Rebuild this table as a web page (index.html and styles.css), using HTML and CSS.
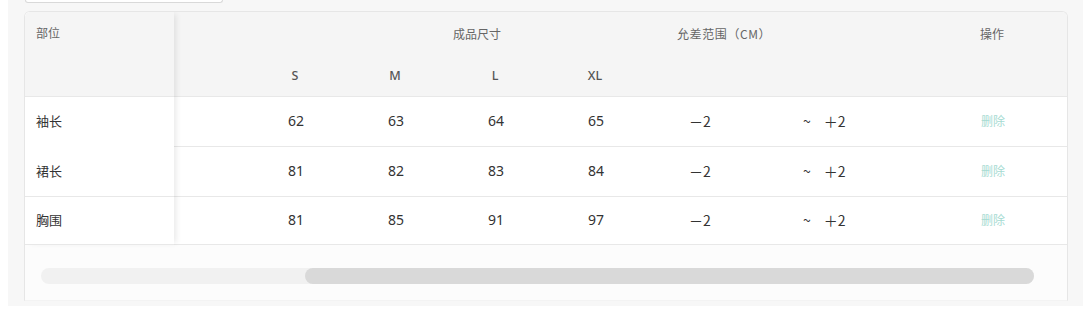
FILE: index.html
```html
<!DOCTYPE html>
<html lang="zh">
<head>
<meta charset="utf-8">
<link rel="stylesheet" href="styles.css">
</head>
<body>
<div class="wrap">
  <div class="input-stub"></div>
  <div class="card">
    <div class="table">
      <div class="fixed">
        <div class="fcell fhead">部位</div>
        <div class="fcell frow noline">袖长</div>
        <div class="fcell frow">裙长</div>
        <div class="fcell frow last">胸围</div>
      </div>
      <div class="scroll">
        <div class="h1 span-size">成品尺寸</div>
        <div class="h1 span-tol">允差范围（CM）</div>
        <div class="h1 center">操作</div>
        <div class="h1"></div>

        <div class="h2"></div>
        <div class="h2 center size">S</div>
        <div class="h2 center size">M</div>
        <div class="h2 center size">L</div>
        <div class="h2 center size">XL</div>
        <div class="h2"></div>
        <div class="h2"></div>
        <div class="h2"></div>
        <div class="h2"></div>

        <div class="td"></div>
        <div class="td center">62</div>
        <div class="td center">63</div>
        <div class="td center">64</div>
        <div class="td center">65</div>
        <div class="td tmin">－2</div>
        <div class="td tmax">~<span class="plus">＋2</span></div>
        <div class="td center del">删除</div>
        <div class="td"></div>

        <div class="td"></div>
        <div class="td center">81</div>
        <div class="td center">82</div>
        <div class="td center">83</div>
        <div class="td center">84</div>
        <div class="td tmin">－2</div>
        <div class="td tmax">~<span class="plus">＋2</span></div>
        <div class="td center del">删除</div>
        <div class="td"></div>

        <div class="td short"></div>
        <div class="td short center">81</div>
        <div class="td short center">85</div>
        <div class="td short center">91</div>
        <div class="td short center">97</div>
        <div class="td short tmin">－2</div>
        <div class="td short tmax">~<span class="plus">＋2</span></div>
        <div class="td short center del">删除</div>
        <div class="td short"></div>
      </div>
    </div>
    <div class="scrollbar-area">
      <div class="track">
        <div class="track-gap"></div>
        <div class="thumb"></div>
      </div>
    </div>
  </div>
</div>
</body>
</html>
```

FILE: styles.css
```css
html, body {
  margin: 0;
  padding: 0;
  background: #ffffff;
}
body {
  padding-left: 8px;
  font-family: "Noto Sans", "Noto Sans CJK SC", sans-serif;
  color: #333;
}
.wrap {
  background: #f7f7f7;
  padding: 0 15px 5px 16px;
}
.input-stub {
  width: 196px;
  height: 2px;
  margin-left: 1px;
  margin-bottom: 8px;
  background: #fff;
  border: 1px solid #d9d9d9;
  border-top: none;
  border-radius: 0 0 4px 4px;
}
.card {
  border: 1px solid #e6e6e6;
  border-bottom-color: #f3f3f3;
  border-radius: 6px 6px 0 0;
  background: #fff;
  overflow: hidden;
}
.table {
  display: flex;
}
.fixed {
  width: 149px;
  flex: none;
  display: flex;
  flex-direction: column;
  position: relative;
  z-index: 1;
  background: #fff;
  box-shadow: 4px 0 6px -2px rgba(0, 0, 0, 0.09);
}
.fcell {
  box-sizing: border-box;
  padding-left: 11px;
  font-family: "Noto Sans CJK SC", sans-serif;
  border-bottom: 1px solid #e8e8e8;
}
.fhead {
  height: 85px;
  background: #f5f5f5;
  font-size: 12px;
  color: #666;
  padding-top: 12px;
}
.frow {
  height: 50px;
  font-size: 13px;
  color: #333;
  display: flex;
  align-items: center;
  padding-bottom: 2px;
}
.frow.noline {
  border-bottom-color: #fff;
}
.frow.last {
  height: 48px;
}
.scroll {
  flex: 1;
  display: grid;
  grid-template-columns: 71px 100px 100px 100px 100px 110px 180px 114px 1fr;
}
.h1 {
  height: 42px;
  background: #f5f5f5;
  font-family: "Noto Sans CJK SC", sans-serif;
  font-size: 12px;
  color: #666;
  display: flex;
  align-items: center;
}
.span-size {
  grid-column: 1 / 6;
  padding-left: 279px;
}
.span-tol {
  grid-column: 6 / 8;
  padding-left: 32px;
  letter-spacing: 0.6px;
}
.h2 {
  box-sizing: border-box;
  height: 43px;
  background: #f5f5f5;
  border-bottom: 1px solid #e8e8e8;
  display: flex;
  align-items: center;
}
.size {
  font-size: 12.5px;
  font-weight: 500;
  color: #555;
}
.center {
  justify-content: center;
}
.td {
  box-sizing: border-box;
  height: 50px;
  border-bottom: 1px solid #e8e8e8;
  display: flex;
  align-items: center;
  font-size: 14px;
  color: #333;
  padding-bottom: 2px;
}
.td.center {
  padding-left: 2px;
}
.td.short {
  height: 48px;
}
.tmin {
  padding-left: 44px;
  font-family: "Noto Sans CJK SC", sans-serif;
}
.tmax {
  padding-left: 48px;
  font-family: "Noto Sans CJK SC", sans-serif;
}
.plus {
  margin-left: 13px;
}
.del {
  font-family: "Noto Sans CJK SC", sans-serif;
  font-size: 12px;
  color: #a6dbd2;
}
.scrollbar-area {
  background: #fcfcfc;
  padding: 23px 33px 16px 16px;
}
.track {
  display: flex;
  height: 16px;
  background: #f1f1f1;
  border-radius: 8px;
}
.track-gap {
  width: 264px;
  flex: none;
}
.thumb {
  flex: 1;
  background: #d9d9d9;
  border-radius: 8px;
}
```
